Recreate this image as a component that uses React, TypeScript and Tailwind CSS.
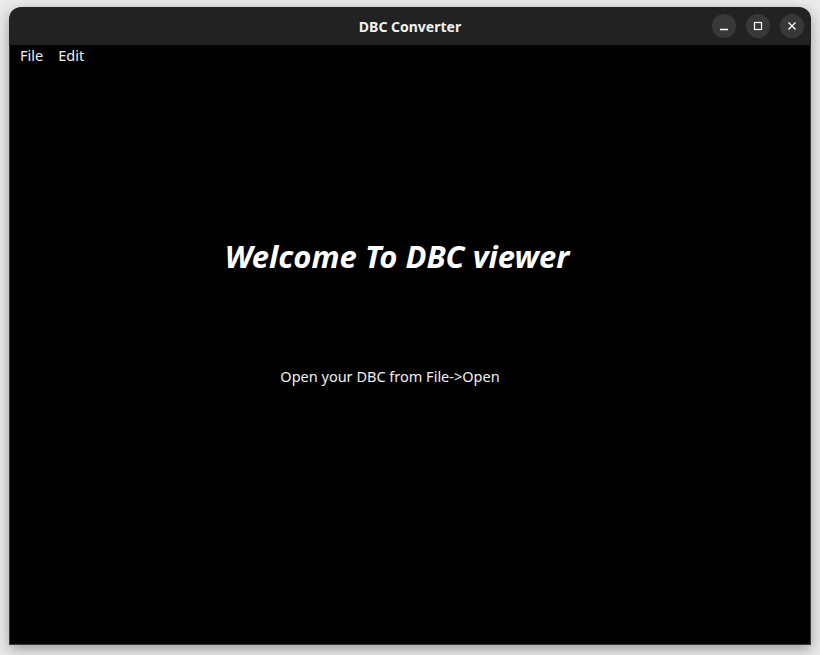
export default function App() {
  return (
    <div className="h-[655px] w-[820px] bg-[#ebebeb] pt-[7px] pl-[9px] font-['Noto_Sans',sans-serif]">
      <div className="flex h-[638px] w-[802px] flex-col overflow-hidden rounded-t-[12px] shadow-[0_4px_14px_rgba(0,0,0,0.35)]">
        {/* Title bar */}
        <div className="relative flex h-[38px] shrink-0 items-center justify-center bg-[#222222]">
          <span className="text-[14px] font-bold text-[#f2f2f2]">DBC Converter</span>
          <div className="absolute right-[7px] top-[7px] flex gap-[10px]">
            <button className="flex h-[24px] w-[24px] items-center justify-center rounded-full bg-[#383838]">
              <svg width="10" height="10" viewBox="0 0 10 10">
                <path d="M1 8.5h8" stroke="#fff" strokeWidth="1.3" />
              </svg>
            </button>
            <button className="flex h-[24px] w-[24px] items-center justify-center rounded-full bg-[#383838]">
              <svg width="10" height="10" viewBox="0 0 10 10">
                <rect x="1.5" y="1.5" width="7" height="7" fill="none" stroke="#fff" strokeWidth="1.2" />
              </svg>
            </button>
            <button className="flex h-[24px] w-[24px] items-center justify-center rounded-full bg-[#383838]">
              <svg width="10" height="10" viewBox="0 0 10 10">
                <path d="M1.5 1.5l7 7M8.5 1.5l-7 7" stroke="#fff" strokeWidth="1.3" />
              </svg>
            </button>
          </div>
        </div>

        {/* Body */}
        <div className="flex flex-1 flex-col border-x border-b border-[#3a3a3a] bg-black">
          <div className="flex gap-[15px] pl-[10px] text-[14.5px] text-[#f0f0f0]">
            <span>File</span>
            <span>Edit</span>
          </div>
          <div className="mr-[26px] mt-[166px] text-center text-[31px] font-bold italic text-white">
            Welcome To DBC viewer
          </div>
          <div className="mr-[40px] mt-[87px] text-center text-[14.5px] text-[#f0f0f0]">
            Open your DBC from File-&gt;Open
          </div>
        </div>
      </div>
    </div>
  );
}
